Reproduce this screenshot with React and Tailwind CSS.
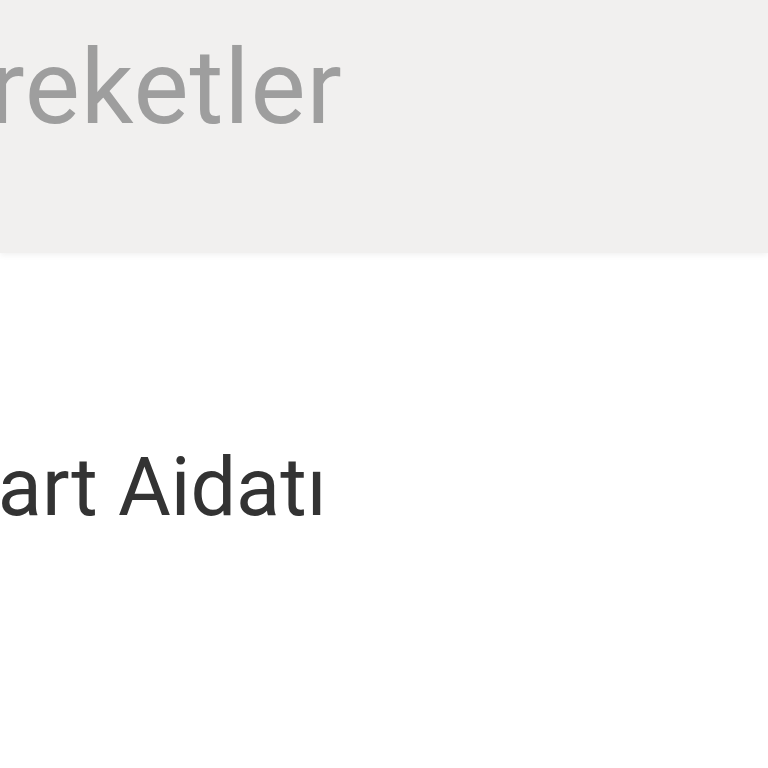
export default function App() {
  return (
    <div className="w-[768px] h-[768px] overflow-hidden bg-white font-['Roboto',sans-serif]">
      <div className="h-[253px] bg-[#f1f0ef] shadow-[0_2px_6px_rgba(0,0,0,0.06)] pt-[36px]">
        <div className="ml-[-143px] text-[104px] leading-none tracking-[0.9px] text-[#9e9e9e] whitespace-nowrap">Hareketler</div>
      </div>
      <div className="pt-[194px]">
        <div className="ml-[-53px] text-[81px] leading-none text-[#333333] whitespace-nowrap">Kart Aidatı</div>
      </div>
    </div>
  )
}
